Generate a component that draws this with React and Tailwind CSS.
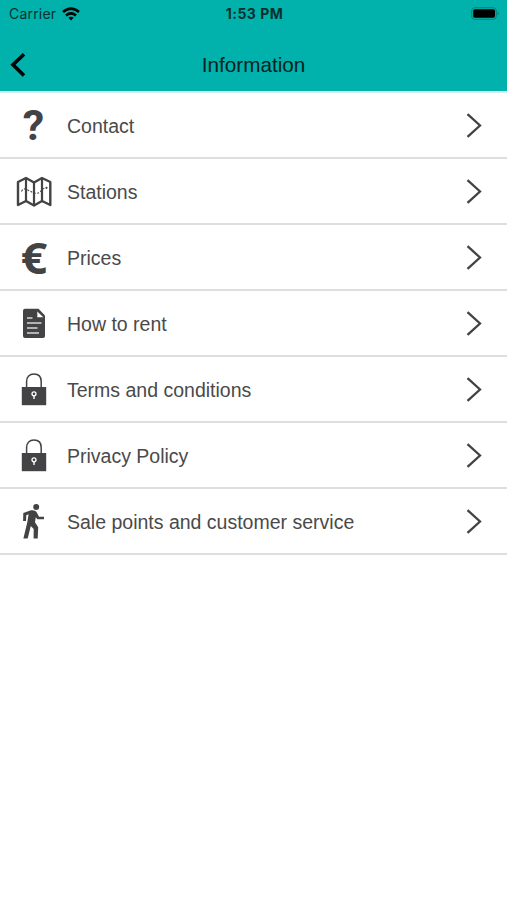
import React from 'react';

const iconClass = 'w-10 h-10 shrink-0 text-[#434345]';

const QuestionIcon = () => (
  <span className={`${iconClass} flex items-center justify-center pr-px pt-px font-['Roboto',sans-serif] font-bold text-[43px] leading-none`}>
    ?
  </span>
);

const EuroIcon = () => (
  <span className={`${iconClass} flex items-center justify-center scale-x-108 font-['Open_Sans',sans-serif] font-bold text-[43px] leading-none`}>
    €
  </span>
);

const MapIcon = () => (
  <svg viewBox="0 0 40 40" className={iconClass} fill="none" stroke="currentColor">
    <path d="M4 11 12 7 20 11.5 28 7 36.3 11V34L28 30 20 34.5 12 30 4 34Z" strokeWidth="2.4" strokeLinejoin="round" />
    <path d="M12 7V30M20 11.5V34.5M28 7V30" strokeWidth="2.2" />
    <path d="M7.5 20.5Q9.5 16.5 13 18.5T20 22Q25 23 27 20T32 17" strokeWidth="1.1" strokeDasharray="2 1.5" />
    <circle cx="32.5" cy="16.8" r="1.1" fill="currentColor" stroke="none" />
  </svg>
);

const DocumentIcon = () => (
  <svg viewBox="0 0 40 40" className={iconClass}>
    <path d="M11 5.7H24.5L31 12.5V33Q31 35 29 35H11Q9 35 9 33V7.7Q9 5.7 11 5.7Z" fill="currentColor" />
    <path d="M23.3 8.5V14.3H29.3Z" fill="white" />
    <path d="M13 15H18.5M13 20H27.5M13 25H23.5M13 30H25" stroke="#d8d8d8" strokeWidth="1.6" />
  </svg>
);

const LockIcon = () => (
  <svg viewBox="0 0 40 40" className={iconClass}>
    <path d="M12.6 19V12.5C12.6 7.7 15.6 5.1 19.9 5.1S27.2 7.7 27.2 12.5V19" fill="none" stroke="currentColor" strokeWidth="1.5" />
    <rect x="7.8" y="18" width="24.4" height="18.2" fill="currentColor" />
    <circle cx="20" cy="24.8" r="2" fill="none" stroke="white" strokeWidth="1.3" />
    <path d="M20 26.5V30" stroke="white" strokeWidth="1.4" />
  </svg>
);

const WalkIcon = () => (
  <svg viewBox="0 0 40 40" className={iconClass}>
    <circle cx="22.2" cy="6.1" r="3" fill="currentColor" />
    <path
      d="M9.3 12.1 17 9.3Q20.8 8.7 22.4 10.8L25 15.8H30V18.3H23.4L21.8 16.3 21 21.2 24.2 26.3 23.7 37.5H19.6L19.7 28 16.8 24.9 13.7 37.5H9.4L13.3 21.2 14.6 13.3 12.3 14.2 12 20H9.1Z"
      fill="currentColor"
    />
  </svg>
);

const menuItems = [
  { label: 'Contact', icon: QuestionIcon },
  { label: 'Stations', icon: MapIcon },
  { label: 'Prices', icon: EuroIcon },
  { label: 'How to rent', icon: DocumentIcon },
  { label: 'Terms and conditions', icon: LockIcon },
  { label: 'Privacy Policy', icon: LockIcon },
  { label: 'Sale points and customer service', icon: WalkIcon },
];

const StatusBar = () => (
  <div className="grid grid-cols-3 items-center h-[27px] pl-[9px] pr-[7px] font-['Inter',sans-serif] text-[#07302e]">
    <div className="flex items-center gap-[6px] text-[14px] leading-5 tracking-[0.2px]">
      <span>Carrier</span>
      <svg viewBox="0 0 18 14" className="w-[18px] h-[14px]" fill="none" stroke="black" strokeWidth="2.6">
        <path d="M1 5Q9 -1.8 17 5" />
        <path d="M4 8.5Q9 4.3 14 8.5" />
        <path d="M9 13.5 6.3 10.6Q9 8.7 11.7 10.6Z" fill="black" stroke="none" />
      </svg>
    </div>
    <span className="text-center text-[14px] leading-5 font-bold tracking-[0.5px]">1:53 PM</span>
    <svg viewBox="0 0 30 14" className="w-[30px] h-[14px] justify-self-end">
      <rect x="1.7" y="0.7" width="24.6" height="11.6" rx="3.2" fill="none" stroke="#057d76" strokeWidth="1" />
      <rect x="3.2" y="2.2" width="21.8" height="8.6" rx="1.8" fill="black" />
      <path d="M27.6 4.6Q30 6.5 27.6 8.4Z" fill="#057d76" />
    </svg>
  </div>
);

const App = () => {
  return (
    <div className="w-full h-[900px] bg-white overflow-hidden font-['Liberation_Sans',Arial,sans-serif]">
      <header className="h-[93px] bg-[#00b2ab] border-b-2 border-[#d5ebe9]">
        <StatusBar />
        <div className="grid grid-cols-[1fr_auto_1fr] items-center h-[64px] pt-3 px-[10px]">
          <button aria-label="Back" className="w-4 h-6">
            <svg viewBox="0 0 16 24" className="w-4 h-6" fill="none" stroke="black" strokeWidth="3.6">
              <path d="M14 1.3 3 11.8 14 22.5" />
            </svg>
          </button>
          <h1 className="text-[20.7px] leading-6 text-[#06211f]">Information</h1>
        </div>
      </header>

      <ul>
        {menuItems.map(({ label, icon: Icon }) => (
          <li key={label} className="flex items-center h-[66px] pl-[14px] pr-[25px] border-b-2 border-[#dedede]">
            <Icon />
            <span className="ml-[13px] mt-px flex-1 text-[19.5px] leading-6 text-[#4a4a4a]">{label}</span>
            <svg viewBox="0 0 16 26" className="w-4 h-[26px]" fill="none" stroke="#434345" strokeWidth="2.3">
              <path d="M1.5 2.2 14 13.5 1.5 24.9" />
            </svg>
          </li>
        ))}
      </ul>
    </div>
  );
};

export default App;
